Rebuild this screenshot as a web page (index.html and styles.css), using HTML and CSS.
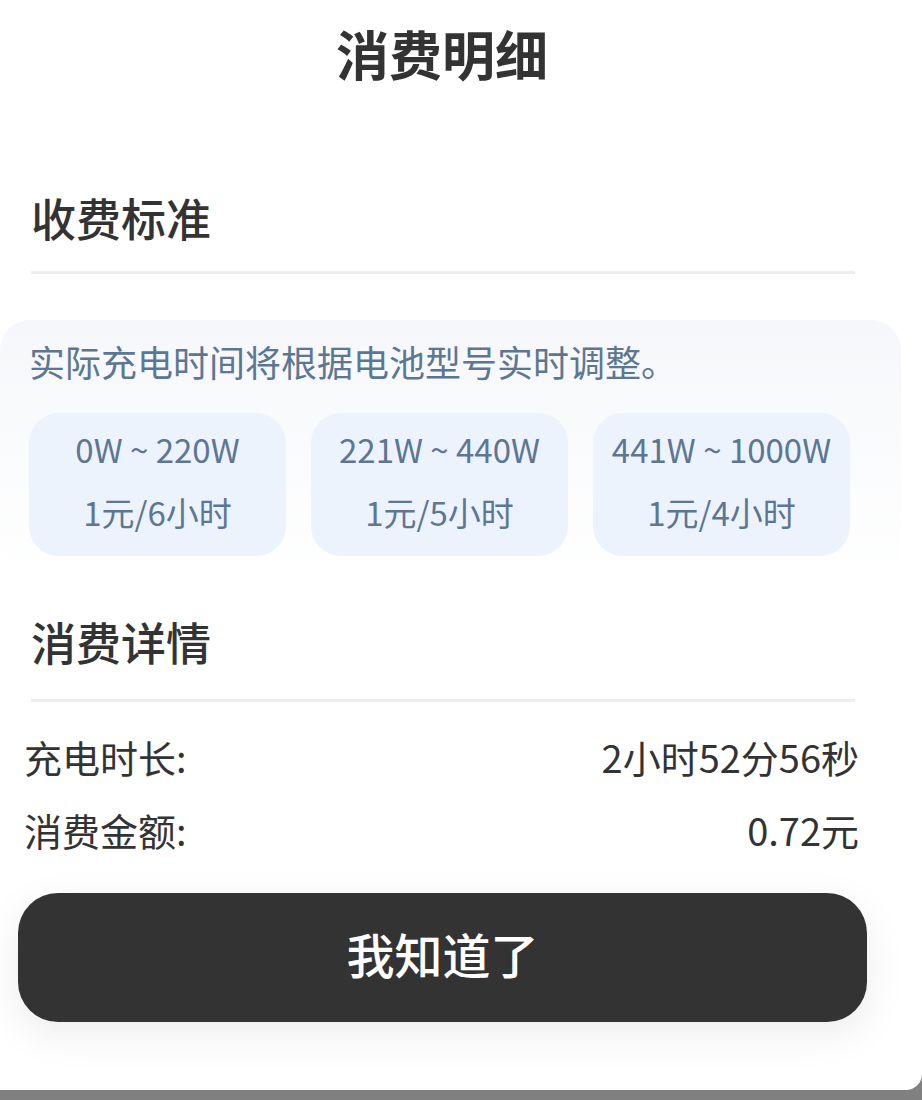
FILE: index.html
```html
<!DOCTYPE html>
<html lang="zh-CN">
<head>
  <meta charset="UTF-8" />
  <meta name="viewport" content="width=device-width, initial-scale=1.0"/>
  <title>消费明细</title>
  <link rel="stylesheet" href="styles.css">
</head>
<body>

  <!-- Bottom sheet -->
  <div class="sheet">
    <div class="content">
      <h1 class="title">消费明细</h1>

      <!-- Charging standard -->
      <h2 class="section-head">收费标准</h2>
      <div class="info-box">
        <p class="notice">实际充电时间将根据电池型号实时调整。</p>
        <div class="tiers">
          <div class="tier">
            <span>0W ~ 220W</span>
            <span>1元/6小时</span>
          </div>
          <div class="tier">
            <span>221W ~ 440W</span>
            <span>1元/5小时</span>
          </div>
          <div class="tier">
            <span>441W ~ 1000W</span>
            <span>1元/4小时</span>
          </div>
        </div>
      </div>

      <!-- Consumption details -->
      <h2 class="section-head detail-head">消费详情</h2>
      <div class="rows">
        <div class="row">
          <span>充电时长:</span>
          <span>2小时52分56秒</span>
        </div>
        <div class="row">
          <span>消费金额:</span>
          <span>0.72元</span>
        </div>
      </div>

      <button class="ok-btn">我知道了</button>
    </div>
  </div>

</body>
</html>
```

FILE: styles.css
```css
body {
  margin: 0;
  font-family: "Noto Sans CJK SC", "Noto Sans", sans-serif;
  background: #808080;
  color: #333;
  overflow: hidden;
}

.sheet {
  background: #fff;
  height: 1090px;
  border-bottom-right-radius: 16px;
}

.content {
  width: 884px;
}

.title {
  margin: 0;
  padding-bottom: 5px;
  line-height: 107px;
  font-size: 53px;
  font-weight: 700;
  text-align: center;
}

.section-head {
  margin: 76px 29px 0 31px;
  padding-bottom: 23px;
  border-bottom: 3px solid #eeeeee;
  line-height: 60px;
  font-size: 45px;
  font-weight: 500;
}

.detail-head {
  margin-top: 32px;
  padding-bottom: 27px;
}

.info-box {
  box-sizing: border-box;
  width: 901px;
  margin-top: 46px;
  padding: 15px 51px 24px 29px;
  border-radius: 30px;
  background: linear-gradient(to bottom, #f5f7fa, #ffffff);
  color: #5d7693;
}

.notice {
  margin: 0;
  line-height: 52px;
  font-size: 36px;
}

.tiers {
  margin-top: 26px;
  display: grid;
  grid-template-columns: repeat(3, 1fr);
  gap: 25px;
}

.tier {
  display: flex;
  flex-direction: column;
  align-items: center;
  padding: 5px 0 12px;
  border-radius: 30px;
  background: #edf3fd;
  font-size: 33px;
  line-height: 63px;
  white-space: nowrap;
}

.rows {
  margin: 18px 25px 0 24px;
}

.row {
  display: flex;
  justify-content: space-between;
  line-height: 73px;
  font-size: 38px;
}

.ok-btn {
  display: block;
  width: 849px;
  height: 129px;
  margin: 27px 0 0 18px;
  padding: 0 0 10px;
  border: none;
  border-radius: 40px;
  background: #333;
  color: #fff;
  font-family: inherit;
  font-size: 48px;
  font-weight: 500;
  box-shadow: 0 12px 40px rgba(0, 0, 0, 0.08);
  cursor: pointer;
}
```
